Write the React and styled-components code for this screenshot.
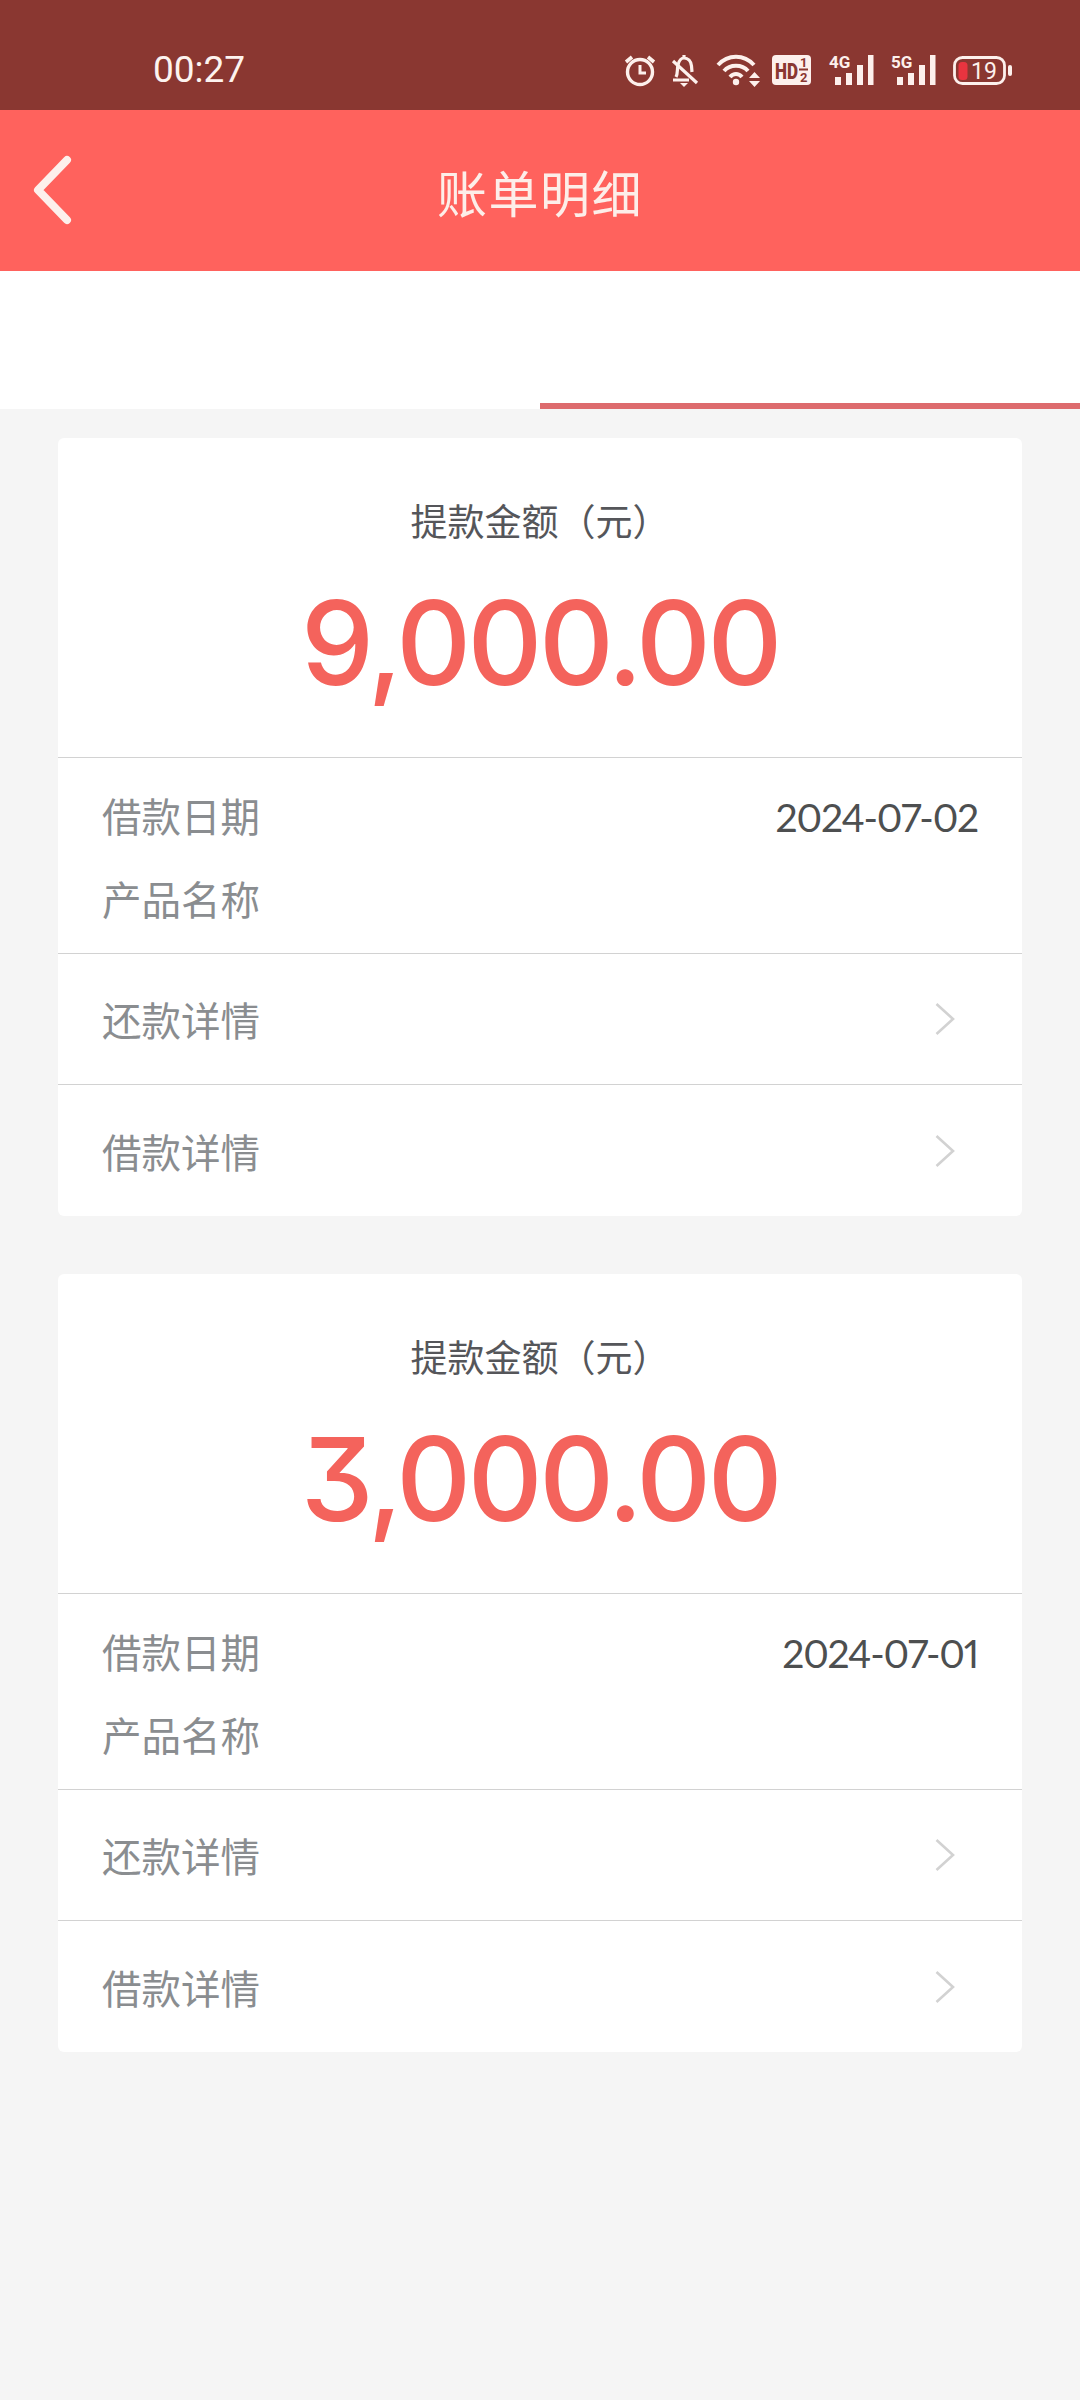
import React from 'react';
import styled, { createGlobalStyle } from 'styled-components';

const Global = createGlobalStyle`
  html, body { margin: 0; padding: 0; background: #f5f5f5; }
  * { box-sizing: border-box; }
`;
const CJK = `"Noto Sans CJK SC", "Noto Sans", sans-serif`;

const Page = styled.div`
  width: 1080px; height: 2400px; background: #f5f5f5; overflow: hidden;
  display: flex; flex-direction: column; font-family: ${CJK};
`;
const StatusBar = styled.div`
  height: 110px; background: #8a3731; color: #fdf3ef; padding: 52px 66px 0 153px;
  display: flex; align-items: flex-start; justify-content: space-between; flex: none;
`;
const Time = styled.div`
  font: 400 37px/36px Roboto, sans-serif;
`;
const StatusIcons = styled.svg`
  width: 390px; height: 34px; display: block; margin-top: 3px; overflow: visible;
`;
const NavBar = styled.div`
  height: 161px; background: #ff625d; color: #fdeee9; flex: none; position: relative;
  display: flex; align-items: center; justify-content: center;
`;
const Title = styled.h1`
  margin: 0; font-size: 50px; font-weight: 400; letter-spacing: 1.5px; line-height: 1;
`;
const BackIcon = styled.svg`
  position: absolute; left: 30px; top: 42px; width: 48px; height: 76px;
`;
const Tabs = styled.div`
  height: 138px; background: #fff; flex: none; display: flex; align-items: flex-end;
  justify-content: flex-end;
`;
const TabLine = styled.div`
  width: 540px; height: 6px; background: #dd6b6d;
`;
const List = styled.div`
  padding: 29px 58px 0; display: flex; flex-direction: column; gap: 58px;
`;
const Card = styled.section`
  background: #fff; border-radius: 6px; overflow: hidden;
  display: flex; flex-direction: column;
`;
const Summary = styled.div`
  height: 320px; display: flex; flex-direction: column; align-items: center;
  border-bottom: 1px solid #d2d2d2;
`;
const SummaryLabel = styled.div`
  font-size: 37px; line-height: 1; color: #55565a; margin-top: 64px;
`;
const Amount = styled.div`
  font-family: Inter, sans-serif; font-feature-settings: "cv09" 1; font-weight: 550;
  font-size: 116px; letter-spacing: -3.4px; line-height: 1; color: #f4635c; margin-top: 46px;
`;
const Info = styled.div`
  height: 196px; padding: 27px 44px 0; border-bottom: 1px solid #d2d2d2;
  display: flex; flex-direction: column; gap: 23px;
`;
const InfoRow = styled.div`
  display: flex; justify-content: space-between; align-items: center; height: 60px;
`;
const Label = styled.span`
  font-size: 39.5px; line-height: 1; color: #8a8d90;
`;
const DateValue = styled.span`
  font: 400 39px/1 Lato, sans-serif; font-variant-numeric: proportional-nums;
  color: #4d4f50; margin-top: 4px; letter-spacing: -1.2px;
`;
const LinkRow = styled.div`
  height: 131px; padding: 0 44px; display: flex; align-items: center; justify-content: space-between;
  &:not(:last-child) { border-bottom: 1px solid #d2d2d2; }
`;
const Chevron = styled.svg`
  width: 22px; height: 34px; margin-right: 22px; display: block;
`;

const ChevronIcon = () => (
  <Chevron viewBox="0 0 22 34" fill="none" stroke="#d2d2d2" strokeWidth="2.6">
    <path d="M2.5 2 L19 17 L2.5 32" />
  </Chevron>
);

const INK = '#fdf0ec';
const BG = '#8a3731';
const ROBOTO = 'Roboto, sans-serif';

const Signal = ({ x, label }) => (
  <g transform={`translate(${x} 0)`} fill={INK} stroke="none">
    <text x="0" y="13" fontFamily={ROBOTO} fontWeight="700" fontSize="17">{label}</text>
    <rect x="6" y="22" width="6" height="8" />
    <rect x="17" y="18" width="6" height="12" />
    <rect x="28" y="10" width="6" height="20" />
    <rect x="39" y="0" width="5.5" height="30" />
  </g>
);

const StatusGlyphs = () => (
  <StatusIcons viewBox="0 0 390 34" fill="none" stroke={INK} strokeWidth="3.4">
    {/* alarm */}
    <circle cx="16" cy="17" r="12.5" />
    <path d="M16 10 V18 H22" strokeWidth="3" />
    <path d="M2 7 L8 2 M30 7 L24 2" strokeWidth="3.6" />
    {/* muted bell */}
    <g transform="translate(47 0)" strokeWidth="3.2">
      <path d="M13 0 V4 M5 22 C7 18 6 14 7 10 C8 5 11 3 13 3 C17 3 20 6 20.5 11 L21 17 M2 25 H18" />
      <path d="M2 6 L26 28" />
      <path d="M9 28 H17 L13 32 Z" fill={INK} stroke="none" />
    </g>
    {/* wifi */}
    <g transform="translate(93 0)" strokeWidth="4">
      <path d="M1 10 C11 -1 27 -1 37 10" />
      <path d="M7 16 C13 9 25 9 31 16" />
      <path d="M13 22 C16.5 18 21.5 18 25 22" />
      <circle cx="19" cy="27" r="3.2" fill={INK} stroke="none" />
      <path d="M32 23 L37.5 17 L43 23 Z M32 26 L37.5 32 L43 26 Z" fill={INK} stroke="none" />
    </g>
    {/* HD pill */}
    <g transform="translate(148 0)">
      <rect x="0" y="0" width="39" height="30" rx="4" fill={INK} stroke="none" />
      <text x="3" y="24" fill={BG} stroke="none" fontFamily={ROBOTO} fontWeight="900" fontSize="22" textLength="23" lengthAdjust="spacingAndGlyphs">HD</text>
      <text x="28" y="12" fill={BG} stroke="none" fontFamily={ROBOTO} fontWeight="700" fontSize="13">1</text>
      <rect x="27" y="13.5" width="9" height="2" fill={BG} stroke="none" />
      <text x="28" y="27" fill={BG} stroke="none" fontFamily={ROBOTO} fontWeight="700" fontSize="13">2</text>
    </g>
    <Signal x={205} label="4G" />
    <Signal x={267} label="5G" />
    {/* battery */}
    <g transform="translate(329 0)">
      <rect x="1.5" y="2.5" width="50" height="26" rx="8" strokeWidth="2.8" />
      <rect x="5.5" y="7" width="9" height="18" rx="3.5" fill="#e8343f" stroke="none" />
      <rect x="55" y="10" width="4" height="11" rx="2" fill={INK} stroke="none" />
      <text x="18" y="24" fill={INK} stroke="none" fontFamily={ROBOTO} fontSize="23">19</text>
    </g>
  </StatusIcons>
);

const bills = [
  { amount: '9,000.00', date: '2024-07-02' },
  { amount: '3,000.00', date: '2024-07-01' },
];

export default function App() {
  return (
    <Page>
      <Global />
      <StatusBar>
        <Time>00:27</Time>
        <StatusGlyphs />
      </StatusBar>
      <NavBar>
        <BackIcon viewBox="0 0 48 76" fill="none" stroke="#fdf0ec" strokeWidth="8" strokeLinecap="round" strokeLinejoin="round">
          <path d="M37 8 L8 38 L37 68" />
        </BackIcon>
        <Title>账单明细</Title>
      </NavBar>
      <Tabs><TabLine /></Tabs>
      <List>
        {bills.map((b) => (
          <Card key={b.date}>
            <Summary>
              <SummaryLabel>提款金额（元）</SummaryLabel>
              <Amount>{b.amount}</Amount>
            </Summary>
            <Info>
              <InfoRow><Label>借款日期</Label><DateValue>{b.date}</DateValue></InfoRow>
              <InfoRow><Label>产品名称</Label></InfoRow>
            </Info>
            <LinkRow><Label>还款详情</Label><ChevronIcon /></LinkRow>
            <LinkRow><Label>借款详情</Label><ChevronIcon /></LinkRow>
          </Card>
        ))}
      </List>
    </Page>
  );
}
